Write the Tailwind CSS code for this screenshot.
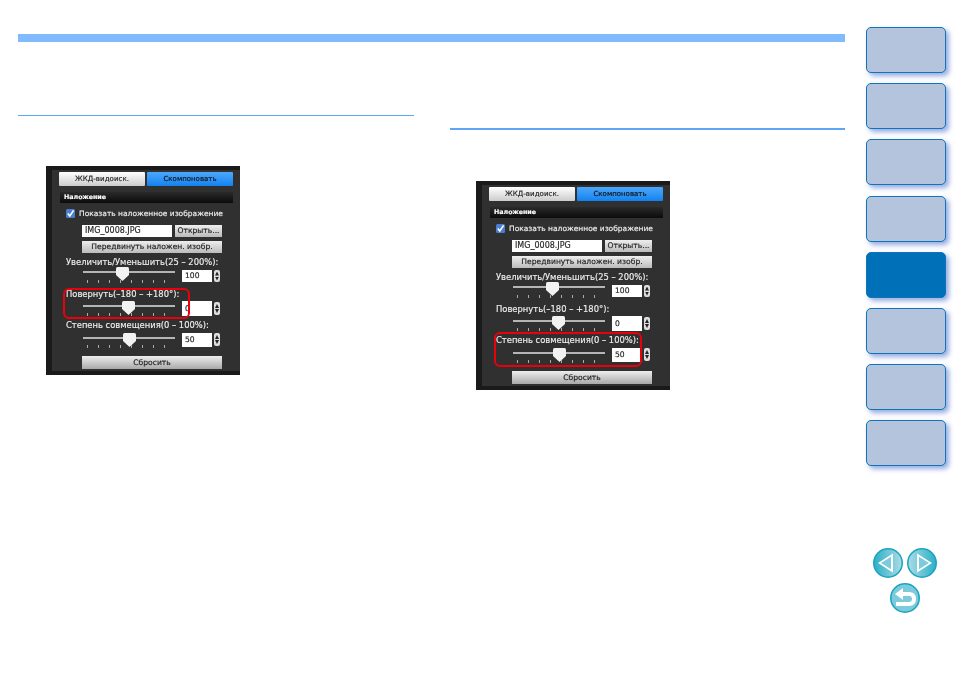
<!DOCTYPE html>
<html>
<head>
<meta charset="utf-8">
<script src="https://cdn.jsdelivr.net/npm/@tailwindcss/browser@4"></script>
</head>
<body class="bg-white font-['DejaVu_Sans',sans-serif]">
<div class="w-[954px] h-[674px] flex overflow-hidden">
  <main class="w-[866px] pl-[18px] pr-[21px] pt-[34px] shrink-0">
    <div class="h-2 bg-[#80bbff]"></div>
    <div class="flex justify-between">
      <!-- left column -->
      <section class="w-[396px]">
        <div class="mt-[73px] h-px bg-[#5fa5f5]"></div>
        <div class="relative mt-[50px] ml-[28px] w-[194px] h-[209px] bg-[#303030] border-l-[6px] border-t-[4px] border-b-[4px] border-[#1a1a1a] text-[#eee] text-[8.4px] leading-none blur-[0.4px] [-webkit-text-stroke:0.15px]">
          <div class="flex gap-[2px] ml-[7px] pt-[2px]">
            <div class="w-[86px] h-[14px] bg-gradient-to-b from-[#fff] to-[#ccc] text-[#222] flex items-center justify-center text-[7.1px] rounded-[1px]">ЖКД-видоиск.</div>
            <div class="w-[86px] h-[14px] bg-gradient-to-b from-[#4aa8fb] to-[#0d82f0] text-[#111] flex items-center justify-center text-[7px] rounded-[1px]">Скомпоновать</div>
          </div>
          <div class="ml-[8px] mt-[6px] w-[173px] h-[11px] bg-gradient-to-b from-[#2a2a2a] to-[#0c0c0c] text-white font-bold text-[6.3px] flex items-center pl-[4px]">Наложение</div>
          <div class="flex items-center gap-[4px] ml-[14px] mt-[6px] h-[9px]">
            <svg class="w-[9px] h-[9px] shrink-0" viewBox="0 0 9 9"><rect width="9" height="9" rx="1.5" fill="#4a7fd0"/><path d="M1.8 4.5 L3.8 7 L7.6 1.4" fill="none" stroke="#fff" stroke-width="1.6"/></svg>
            <span class="whitespace-nowrap text-[7.5px]">Показать наложенное изображение</span>
          </div>
          <div class="flex ml-[30px] mt-[7px] gap-[3px]">
            <div class="w-[90px] h-[12px] bg-white text-[#222] text-[8px] flex items-center pl-[3px]">IMG_0008.JPG</div>
            <div class="w-[47px] h-[12px] bg-gradient-to-b from-[#eee] to-[#bbb] text-[#222] text-[7.6px] flex items-center justify-center">Открыть...</div>
          </div>
          <div class="ml-[30px] mt-[4px] w-[140px] h-[12px] bg-gradient-to-b from-[#eee] to-[#bbb] text-[#222] text-[7.6px] flex items-center justify-center">Передвинуть наложен. изобр.</div>
          <div class="ml-[14px] mt-[4px] h-[11px] flex items-center whitespace-nowrap">Увеличить/Уменьшить(25 – 200%):</div>
          <div class="relative flex ml-[31px] mt-[2px] h-[13px]">
            <div class="w-[92px] relative">
              <div class="absolute left-0 right-0 top-[1px] h-[2px] bg-[#b5b5b5]"></div>
              <svg class="absolute left-[33px] top-[-3px] w-[13px] h-[14px]" viewBox="0 0 13 14"><path d="M1.5 0 H11.5 Q13 0 13 1.5 V8 L6.5 14 L0 8 V1.5 Q0 0 1.5 0 Z" fill="#f2f2f2"/></svg>
              <div class="absolute left-[4px] right-[3px] top-[10px] h-[3px] bg-[repeating-linear-gradient(90deg,#aaa_0_1px,transparent_1px_11px)]"></div>
            </div>
            <div class="ml-[7px] w-[30px] h-[12px] bg-white text-[#222] text-[7.6px] flex items-center pl-[3px]">100</div>
            <div class="ml-[2px] w-[6px] h-[12px] rounded-[2px] bg-[#ddd] flex flex-col items-center justify-center gap-[1px]"><i class="block w-[4px] h-[4px] bg-[#222] [clip-path:polygon(50%_0,100%_100%,0_100%)]"></i><i class="block w-[4px] h-[4px] bg-[#222] [clip-path:polygon(0_0,100%_0,50%_100%)]"></i></div>
          </div>
          <div class="ml-[14px] mt-[6px] h-[11px] flex items-center whitespace-nowrap">Повернуть(–180 – +180°):</div>
          <div class="relative flex ml-[31px] mt-[1px] h-[15px]">
            <div class="w-[92px] relative">
              <div class="absolute left-0 right-0 top-[4px] h-[2px] bg-[#b5b5b5]"></div>
              <svg class="absolute left-[39px] top-0 w-[13px] h-[14px]" viewBox="0 0 13 14"><path d="M1.5 0 H11.5 Q13 0 13 1.5 V8 L6.5 14 L0 8 V1.5 Q0 0 1.5 0 Z" fill="#f2f2f2"/></svg>
              <div class="absolute left-[4px] right-[3px] top-[12px] h-[3px] bg-[repeating-linear-gradient(90deg,#aaa_0_1px,transparent_1px_11px)]"></div>
            </div>
            <div class="ml-[7px] w-[30px] h-[15px] bg-white text-[#222] text-[7.6px] flex items-center pl-[3px]">0</div>
            <div class="ml-[2px] mt-[1px] w-[6px] h-[13px] rounded-[2px] bg-[#ddd] flex flex-col items-center justify-center gap-[1px]"><i class="block w-[4px] h-[4px] bg-[#222] [clip-path:polygon(50%_0,100%_100%,0_100%)]"></i><i class="block w-[4px] h-[4px] bg-[#222] [clip-path:polygon(0_0,100%_0,50%_100%)]"></i></div>
          </div>
          <div class="ml-[14px] mt-[4px] h-[11px] flex items-center whitespace-nowrap">Степень совмещения(0 – 100%):</div>
          <div class="relative flex ml-[31px] mt-[2px] h-[15px]">
            <div class="w-[92px] relative">
              <div class="absolute left-0 right-0 top-[4px] h-[2px] bg-[#b5b5b5]"></div>
              <svg class="absolute left-[40px] top-0 w-[13px] h-[14px]" viewBox="0 0 13 14"><path d="M1.5 0 H11.5 Q13 0 13 1.5 V8 L6.5 14 L0 8 V1.5 Q0 0 1.5 0 Z" fill="#f2f2f2"/></svg>
              <div class="absolute left-[4px] right-[3px] top-[12px] h-[3px] bg-[repeating-linear-gradient(90deg,#aaa_0_1px,transparent_1px_11px)]"></div>
            </div>
            <div class="ml-[7px] w-[30px] h-[14px] bg-white text-[#222] text-[7.6px] flex items-center pl-[3px]">50</div>
            <div class="ml-[2px] w-[6px] h-[13px] rounded-[2px] bg-[#ddd] flex flex-col items-center justify-center gap-[1px]"><i class="block w-[4px] h-[4px] bg-[#222] [clip-path:polygon(50%_0,100%_100%,0_100%)]"></i><i class="block w-[4px] h-[4px] bg-[#222] [clip-path:polygon(0_0,100%_0,50%_100%)]"></i></div>
          </div>
          <div class="ml-[30px] mt-[8px] w-[140px] h-[13px] bg-gradient-to-b from-[#eee] to-[#aaa] text-[#222] text-[7.6px] flex items-center justify-center">Сбросить</div>
          <div class="absolute left-[11px] top-[118px] w-[127px] h-[31px] border-2 border-[#e8000d] rounded-[6px]"></div>
        </div>
      </section>
      <!-- right column -->
      <section class="w-[395px]">
        <div class="mt-[86px] h-[2px] bg-[#5fa5f5]"></div>
        <div class="relative mt-[51px] ml-[26px] w-[194px] h-[209px] bg-[#303030] border-l-[6px] border-t-[4px] border-b-[4px] border-[#1a1a1a] text-[#eee] text-[8.4px] leading-none blur-[0.4px] [-webkit-text-stroke:0.15px]">
          <div class="flex gap-[2px] ml-[7px] pt-[2px]">
            <div class="w-[86px] h-[14px] bg-gradient-to-b from-[#fff] to-[#ccc] text-[#222] flex items-center justify-center text-[7.1px] rounded-[1px]">ЖКД-видоиск.</div>
            <div class="w-[86px] h-[14px] bg-gradient-to-b from-[#4aa8fb] to-[#0d82f0] text-[#111] flex items-center justify-center text-[7px] rounded-[1px]">Скомпоновать</div>
          </div>
          <div class="ml-[8px] mt-[6px] w-[173px] h-[11px] bg-gradient-to-b from-[#2a2a2a] to-[#0c0c0c] text-white font-bold text-[6.3px] flex items-center pl-[4px]">Наложение</div>
          <div class="flex items-center gap-[4px] ml-[14px] mt-[6px] h-[9px]">
            <svg class="w-[9px] h-[9px] shrink-0" viewBox="0 0 9 9"><rect width="9" height="9" rx="1.5" fill="#4a7fd0"/><path d="M1.8 4.5 L3.8 7 L7.6 1.4" fill="none" stroke="#fff" stroke-width="1.6"/></svg>
            <span class="whitespace-nowrap text-[7.5px]">Показать наложенное изображение</span>
          </div>
          <div class="flex ml-[30px] mt-[7px] gap-[3px]">
            <div class="w-[90px] h-[12px] bg-white text-[#222] text-[8px] flex items-center pl-[3px]">IMG_0008.JPG</div>
            <div class="w-[47px] h-[12px] bg-gradient-to-b from-[#eee] to-[#bbb] text-[#222] text-[7.6px] flex items-center justify-center">Открыть...</div>
          </div>
          <div class="ml-[30px] mt-[4px] w-[140px] h-[12px] bg-gradient-to-b from-[#eee] to-[#bbb] text-[#222] text-[7.6px] flex items-center justify-center">Передвинуть наложен. изобр.</div>
          <div class="ml-[14px] mt-[4px] h-[11px] flex items-center whitespace-nowrap">Увеличить/Уменьшить(25 – 200%):</div>
          <div class="relative flex ml-[31px] mt-[2px] h-[13px]">
            <div class="w-[92px] relative">
              <div class="absolute left-0 right-0 top-[1px] h-[2px] bg-[#b5b5b5]"></div>
              <svg class="absolute left-[33px] top-[-3px] w-[13px] h-[14px]" viewBox="0 0 13 14"><path d="M1.5 0 H11.5 Q13 0 13 1.5 V8 L6.5 14 L0 8 V1.5 Q0 0 1.5 0 Z" fill="#f2f2f2"/></svg>
              <div class="absolute left-[4px] right-[3px] top-[10px] h-[3px] bg-[repeating-linear-gradient(90deg,#aaa_0_1px,transparent_1px_11px)]"></div>
            </div>
            <div class="ml-[7px] w-[30px] h-[12px] bg-white text-[#222] text-[7.6px] flex items-center pl-[3px]">100</div>
            <div class="ml-[2px] w-[6px] h-[12px] rounded-[2px] bg-[#ddd] flex flex-col items-center justify-center gap-[1px]"><i class="block w-[4px] h-[4px] bg-[#222] [clip-path:polygon(50%_0,100%_100%,0_100%)]"></i><i class="block w-[4px] h-[4px] bg-[#222] [clip-path:polygon(0_0,100%_0,50%_100%)]"></i></div>
          </div>
          <div class="ml-[14px] mt-[6px] h-[11px] flex items-center whitespace-nowrap">Повернуть(–180 – +180°):</div>
          <div class="relative flex ml-[31px] mt-[1px] h-[15px]">
            <div class="w-[92px] relative">
              <div class="absolute left-0 right-0 top-[4px] h-[2px] bg-[#b5b5b5]"></div>
              <svg class="absolute left-[39px] top-0 w-[13px] h-[14px]" viewBox="0 0 13 14"><path d="M1.5 0 H11.5 Q13 0 13 1.5 V8 L6.5 14 L0 8 V1.5 Q0 0 1.5 0 Z" fill="#f2f2f2"/></svg>
              <div class="absolute left-[4px] right-[3px] top-[12px] h-[3px] bg-[repeating-linear-gradient(90deg,#aaa_0_1px,transparent_1px_11px)]"></div>
            </div>
            <div class="ml-[7px] w-[30px] h-[15px] bg-white text-[#222] text-[7.6px] flex items-center pl-[3px]">0</div>
            <div class="ml-[2px] mt-[1px] w-[6px] h-[13px] rounded-[2px] bg-[#ddd] flex flex-col items-center justify-center gap-[1px]"><i class="block w-[4px] h-[4px] bg-[#222] [clip-path:polygon(50%_0,100%_100%,0_100%)]"></i><i class="block w-[4px] h-[4px] bg-[#222] [clip-path:polygon(0_0,100%_0,50%_100%)]"></i></div>
          </div>
          <div class="ml-[14px] mt-[4px] h-[11px] flex items-center whitespace-nowrap">Степень совмещения(0 – 100%):</div>
          <div class="relative flex ml-[31px] mt-[2px] h-[15px]">
            <div class="w-[92px] relative">
              <div class="absolute left-0 right-0 top-[4px] h-[2px] bg-[#b5b5b5]"></div>
              <svg class="absolute left-[40px] top-0 w-[13px] h-[14px]" viewBox="0 0 13 14"><path d="M1.5 0 H11.5 Q13 0 13 1.5 V8 L6.5 14 L0 8 V1.5 Q0 0 1.5 0 Z" fill="#f2f2f2"/></svg>
              <div class="absolute left-[4px] right-[3px] top-[12px] h-[3px] bg-[repeating-linear-gradient(90deg,#aaa_0_1px,transparent_1px_11px)]"></div>
            </div>
            <div class="ml-[7px] w-[30px] h-[14px] bg-white text-[#222] text-[7.6px] flex items-center pl-[3px]">50</div>
            <div class="ml-[2px] w-[6px] h-[13px] rounded-[2px] bg-[#ddd] flex flex-col items-center justify-center gap-[1px]"><i class="block w-[4px] h-[4px] bg-[#222] [clip-path:polygon(50%_0,100%_100%,0_100%)]"></i><i class="block w-[4px] h-[4px] bg-[#222] [clip-path:polygon(0_0,100%_0,50%_100%)]"></i></div>
          </div>
          <div class="ml-[30px] mt-[8px] w-[140px] h-[13px] bg-gradient-to-b from-[#eee] to-[#aaa] text-[#222] text-[7.6px] flex items-center justify-center">Сбросить</div>
          <div class="absolute left-[12px] top-[147px] w-[148px] h-[35px] border-2 border-[#e8000d] rounded-[6px]"></div>
        </div>
      </section>
    </div>
  </main>
  <!-- sidebar -->
  <aside class="w-[88px] shrink-0 flex flex-col">
    <div class="mt-[27px] flex flex-col gap-[10.2px]">
      <div class="w-[80px] h-[46px] rounded-[5px] bg-[#b3c4dc] border-[1.5px] border-[#0f74ba] shadow-[3px_3px_5px_rgba(60,100,200,0.55)]"></div>
      <div class="w-[80px] h-[46px] rounded-[5px] bg-[#b3c4dc] border-[1.5px] border-[#0f74ba] shadow-[3px_3px_5px_rgba(60,100,200,0.55)]"></div>
      <div class="w-[80px] h-[46px] rounded-[5px] bg-[#b3c4dc] border-[1.5px] border-[#0f74ba] shadow-[3px_3px_5px_rgba(60,100,200,0.55)]"></div>
      <div class="w-[80px] h-[46px] rounded-[5px] bg-[#b3c4dc] border-[1.5px] border-[#0f74ba] shadow-[3px_3px_5px_rgba(60,100,200,0.55)]"></div>
      <div class="w-[80px] h-[46px] rounded-[5px] bg-[#0071b8] border-[1.5px] border-[#0f74ba] shadow-[3px_3px_5px_rgba(60,100,200,0.55)]"></div>
      <div class="w-[80px] h-[46px] rounded-[5px] bg-[#b3c4dc] border-[1.5px] border-[#0f74ba] shadow-[3px_3px_5px_rgba(60,100,200,0.55)]"></div>
      <div class="w-[80px] h-[46px] rounded-[5px] bg-[#b3c4dc] border-[1.5px] border-[#0f74ba] shadow-[3px_3px_5px_rgba(60,100,200,0.55)]"></div>
      <div class="w-[80px] h-[46px] rounded-[5px] bg-[#b3c4dc] border-[1.5px] border-[#0f74ba] shadow-[3px_3px_5px_rgba(60,100,200,0.55)]"></div>
    </div>
    <div class="mt-[82px] ml-[7px] flex gap-[4px]">
      <svg class="w-[30px] h-[30px]" viewBox="0 0 30 30"><defs><linearGradient id="a" x1="0" x2="1" y1="0" y2="0"><stop offset="0" stop-color="#2fb0c8"/><stop offset="1" stop-color="#a8dbe4"/></linearGradient></defs><circle cx="15" cy="15" r="15" fill="#1aa3bf"/><circle cx="15" cy="15" r="13.5" fill="url(#a)"/><path d="M5 15 L20 5.5 V24.5 Z" fill="#fff"/><path d="M8 15 L18 8.8 V21.2 Z" fill="#7ccbdc"/></svg>
      <svg class="w-[30px] h-[30px]" viewBox="0 0 30 30"><defs><linearGradient id="b" x1="0" x2="1" y1="0" y2="0"><stop offset="0" stop-color="#a8dbe4"/><stop offset="1" stop-color="#2fb0c8"/></linearGradient></defs><circle cx="15" cy="15" r="15" fill="#1aa3bf"/><circle cx="15" cy="15" r="13.5" fill="url(#b)"/><path d="M25 15 L10 5.5 V24.5 Z" fill="#fff"/><path d="M22 15 L12 8.8 V21.2 Z" fill="#7ccbdc"/></svg>
    </div>
    <div class="mt-[5px] ml-[24px]">
      <svg class="w-[30px] h-[30px]" viewBox="0 0 30 30"><circle cx="15" cy="15" r="15" fill="#1aa3bf"/><circle cx="15" cy="15" r="13.5" fill="#7ccbdc"/><path d="M5 11 L13 5 V17 Z" fill="#fff"/><path d="M11 11 H19 Q24 11 24 16 Q24 21 19 21 H6" fill="none" stroke="#fff" stroke-width="4"/></svg>
    </div>
  </aside>
</div>
</body>
</html>
